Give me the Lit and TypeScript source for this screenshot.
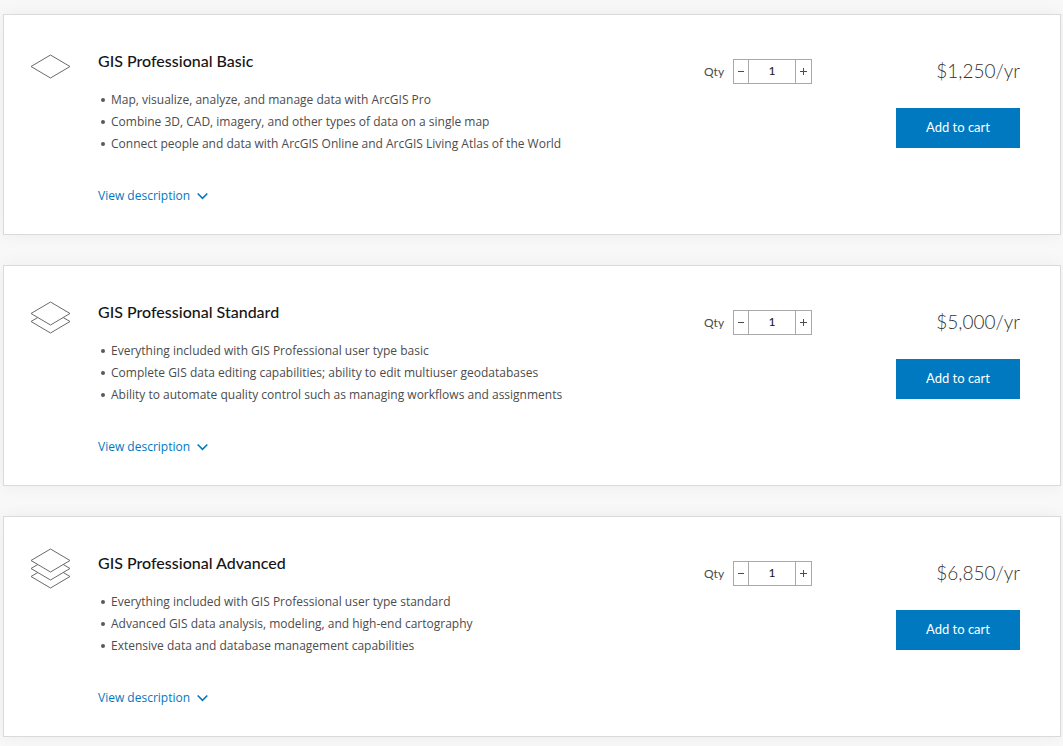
import { LitElement, html, css, svg } from "lit";
import { customElement, property, state } from "lit/decorators.js";

interface Product {
  id: string;
  name: string;
  price: string;
  layers: number;
  features: string[];
}

const PRODUCTS: Product[] = [
  {
    id: "basic",
    name: "GIS Professional Basic",
    price: "$1,250/yr",
    layers: 1,
    features: [
      "Map, visualize, analyze, and manage data with ArcGIS Pro",
      "Combine 3D, CAD, imagery, and other types of data on a single map",
      "Connect people and data with ArcGIS Online and ArcGIS Living Atlas of the World",
    ],
  },
  {
    id: "standard",
    name: "GIS Professional Standard",
    price: "$5,000/yr",
    layers: 2,
    features: [
      "Everything included with GIS Professional user type basic",
      "Complete GIS data editing capabilities; ability to edit multiuser geodatabases",
      "Ability to automate quality control such as managing workflows and assignments",
    ],
  },
  {
    id: "advanced",
    name: "GIS Professional Advanced",
    price: "$6,850/yr",
    layers: 3,
    features: [
      "Everything included with GIS Professional user type standard",
      "Advanced GIS data analysis, modeling, and high-end cartography",
      "Extensive data and database management capabilities",
    ],
  },
];

@customElement("product-card")
export class ProductCard extends LitElement {
  @property({ attribute: false }) product!: Product;
  @state() private qty = 1;

  static styles = css`
    :host {
      display: block;
    }
    .card {
      display: grid;
      grid-template-columns: 42px minmax(0, 1fr) auto 124px;
      background: #fff;
      border: 1px solid #dadada;
      box-shadow: 0 0 16px rgba(0, 0, 0, 0.05);
      padding: 31px 40px 28px 26px;
    }
    .icon {
      display: block;
      fill: none;
      stroke: #6a6a6a;
      stroke-width: 1;
    }
    .info {
      padding: 3px 24px 0 26px;
    }
    .name {
      margin: 0 0 16px;
      font-size: 16px;
      font-weight: 500;
      line-height: 24px;
      color: #151515;
    }
    .features {
      margin: 0 0 31px;
      padding: 0;
      list-style: none;
    }
    .feature {
      display: flex;
      align-items: center;
      gap: 6px;
      padding-left: 3px;
      font-family: "Open Sans", sans-serif;
      font-size: 12px;
      line-height: 22px;
    }
    .feature::before {
      content: "";
      flex: none;
      width: 4px;
      height: 4px;
      border-radius: 50%;
      background: #595959;
    }
    .more {
      display: flex;
      width: fit-content;
      align-items: center;
      gap: 7px;
      font-family: "Open Sans", sans-serif;
      font-size: 12px;
      line-height: 20px;
      color: #0079c1;
      text-decoration: none;
    }
    .chevron {
      fill: none;
      stroke: #0079c1;
      stroke-width: 1.6;
    }
    .qty {
      display: flex;
      align-items: center;
      align-self: start;
      height: 25px;
      margin: 13px 84px 0 0;
    }
    .label {
      width: 29px;
      font-size: 12px;
      line-height: 20px;
    }
    .stepper {
      display: grid;
      grid-template-columns: 14px 48px 15px;
      height: 25px;
      box-sizing: border-box;
      border: 1px solid #a9a9a9;
    }
    .step {
      display: grid;
      place-items: center;
      padding: 0;
      border: 0;
      background: #fff;
      cursor: pointer;
    }
    .glyph {
      stroke: #4c4c4c;
      stroke-width: 1;
    }
    .count {
      box-sizing: border-box;
      min-width: 0;
      padding: 0 0 2px;
      border: solid #a9a9a9;
      border-width: 0 1px;
      border-radius: 0;
      font: inherit;
      font-size: 12px;
      text-align: center;
      color: #151515;
      background: #fff;
    }
    .buy {
      display: flex;
      flex-direction: column;
      padding-top: 9px;
    }
    .price {
      margin: 0 0 21px;
      font-size: 19px;
      font-weight: 300;
      line-height: 32px;
      text-align: right;
      white-space: nowrap;
      color: #323232;
    }
    .add {
      height: 40px;
      padding: 0 0 2px;
      border: 0;
      font: inherit;
      font-size: 13px;
      color: #fff;
      background: #0079c1;
      cursor: pointer;
    }
  `;

  private icon(layers: number) {
    const top = 13 - 4 * layers;
    const extra = Array.from({ length: layers - 1 }, (_, i) => {
      const mid = top + 11.5 + 8 * (i + 1);
      return svg`<path d="M7.8 ${mid - 4}L1 ${mid}L20.5 ${mid + 11.5}L40 ${mid}L33.2 ${mid - 4}" />`;
    });
    return html`<svg class="icon" width="42" height="42" viewBox="0 0 42 42" aria-hidden="true">
      ${svg`<path d="M20.5 ${top}L40 ${top + 11.5}L20.5 ${top + 23}L1 ${top + 11.5}Z" />`}${extra}
    </svg>`;
  }

  private change(by: number) {
    this.qty = Math.max(1, this.qty + by);
  }

  render() {
    const p = this.product;
    return html`
      <article class="card">
        ${this.icon(p.layers)}
        <div class="info">
          <h2 class="name">${p.name}</h2>
          <ul class="features">
            ${p.features.map((f) => html`<li class="feature">${f}</li>`)}
          </ul>
          <a class="more" href="#${p.id}"
            >View description<svg class="chevron" width="11" height="8" viewBox="0 0 11 8" aria-hidden="true">
              <path d="M0.7 1.5L5.5 6.3L10.3 1.5" /></svg
          ></a>
        </div>
        <div class="qty">
          <label class="label" for="qty">Qty</label>
          <div class="stepper">
            <button class="step" type="button" aria-label="Decrease quantity" @click=${() => this.change(-1)}>
              <svg class="glyph" width="6" height="7" viewBox="0 0 6 7"><path d="M0 3.5H6" /></svg>
            </button>
            <input class="count" id="qty" type="text" inputmode="numeric" .value=${String(this.qty)} />
            <button class="step" type="button" aria-label="Increase quantity" @click=${() => this.change(1)}>
              <svg class="glyph" width="7" height="7" viewBox="0 0 7 7"><path d="M0 3.5H7M3.5 0V7" /></svg>
            </button>
          </div>
        </div>
        <div class="buy">
          <p class="price">${p.price}</p>
          <button class="add" type="button">Add to cart</button>
        </div>
      </article>
    `;
  }
}

@customElement("app-root")
export class AppRoot extends LitElement {
  static styles = css`
    :host {
      display: block;
      min-height: 100vh;
      box-sizing: border-box;
      overflow: hidden;
      background: #f8f8f8;
      color: #4c4c4c;
      font-family: Lato, "Open Sans", sans-serif;
      font-variant-ligatures: none;
    }
    .list {
      display: grid;
      gap: 30px;
      padding: 14px 2px 9px 3px;
    }
  `;

  render() {
    return html`<main class="list">
      ${PRODUCTS.map((p) => html`<product-card .product=${p}></product-card>`)}
    </main>`;
  }
}
